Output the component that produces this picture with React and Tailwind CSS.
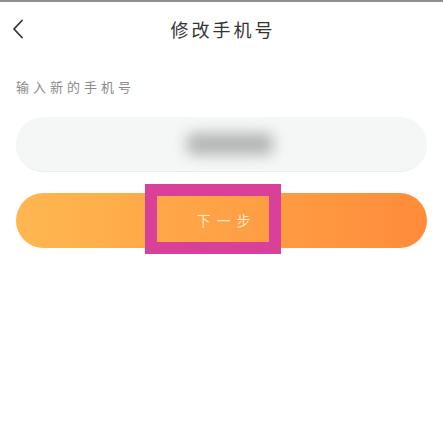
import React from "react";

const App = () => {
  return (
    <div
      className="w-[443px] h-[446px] bg-white border-t-2 border-[#8f8f8f] overflow-hidden"
      style={{ fontFamily: '"Noto Sans CJK SC", "Noto Sans", sans-serif' }}
    >
      {/* Header */}
      <div className="relative h-[56px] flex items-center justify-center">
        <button className="absolute left-[10px] top-[14px] w-[16px] h-[26px] flex items-center justify-center">
          <svg width="12" height="20" viewBox="0 0 12 20" fill="none">
            <path d="M10 1.5 L2 10 L10 18.5" stroke="#333" strokeWidth="1.8" strokeLinecap="round" strokeLinejoin="round" />
          </svg>
        </button>
        <h1 className="text-[18px] text-[#333] tracking-[3px] pl-[3px] mt-[-2px]">修改手机号</h1>
      </div>

      <div className="px-4">
        {/* Label */}
        <p className="text-[13px] text-[#8a8a8a] tracking-[4px] mt-[20px] leading-[18px]">输入新的手机号</p>

        {/* Input */}
        <div className="mt-[21px] h-[55px] rounded-[28px] bg-[#f5f6f6] border-b border-[#ececec] flex items-center justify-center">
          <div className="w-[86px] h-[22px] rounded-md bg-[#b3b6b6] blur-[7px] ml-[16px]"></div>
        </div>

        {/* Next button */}
        <div className="relative mt-[21px]">
          <button className="w-full h-[55px] rounded-full bg-gradient-to-r from-[#ffb750] to-[#ff8b3b] flex items-center justify-center">
            <span className="text-[14px] text-[#fde8c8] tracking-[6px] pl-[6px] ml-[4px]">下一步</span>
          </button>
          {/* Highlight box */}
          <div className="absolute left-[129px] top-[-9px] w-[136px] h-[70px] border-[12px] border-[#d8409a]"></div>
        </div>
      </div>
    </div>
  );
};

export default App;
